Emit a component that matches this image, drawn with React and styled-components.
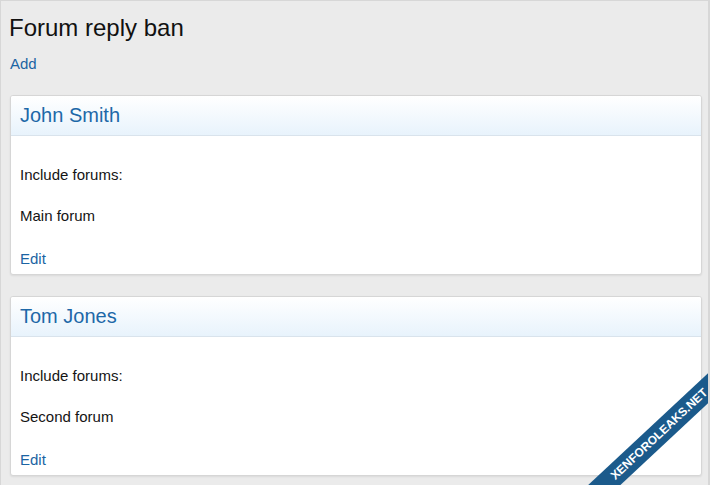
import React from 'react';
import styled, { createGlobalStyle } from 'styled-components';

const GlobalStyle = createGlobalStyle`
  html, body {
    margin: 0;
    padding: 0;
    overflow: hidden;
  }
  body {
    font-family: 'Liberation Sans', Arial, sans-serif;
    background: #ebebeb;
  }
`;

const Page = styled.div`
  position: relative;
  box-sizing: border-box;
  width: 710px;
  height: 485px;
  overflow: hidden;
  background: #ebebeb;
  border: 1px solid #d7d7d7;
  border-bottom: none;
  border-right-width: 2px;
  padding: 0 6px 0 9px;
`;

const Title = styled.h1`
  margin: 12px 0 0 -1px;
  font-size: 24px;
  line-height: 30px;
  font-weight: 400;
  color: #111;
`;

const Link = styled.a`
  color: #1b64a3;
  text-decoration: none;
  font-size: 15px;
  cursor: pointer;
`;

const AddRow = styled.div`
  margin-top: 11px;
  line-height: 20px;
`;

const List = styled.div`
  display: flex;
  flex-direction: column;
  gap: 21px;
  margin-top: 21px;
`;

const Card = styled.section`
  background: #fff;
  border: 1px solid #d6d6d6;
  border-radius: 3px;
  box-shadow: 0 1px 2px rgba(0, 0, 0, 0.08);
  overflow: hidden;
`;

const CardHeader = styled.h2`
  margin: 0;
  height: 40px;
  box-sizing: border-box;
  padding: 0 9px;
  display: flex;
  align-items: center;
  font-size: 20px;
  font-weight: 400;
  color: #1d68a8;
  background: linear-gradient(to bottom, #ffffff, #e8f3fc);
  border-bottom: 1px solid #d9e3ec;
`;

const CardBody = styled.div`
  display: flex;
  flex-direction: column;
  padding: 29px 9px 5px;
`;

const Line = styled.div`
  line-height: 20px;
  font-size: 15px;
  color: #141414;
  margin-top: ${p => p.$gap || 0}px;
`;

const Ribbon = styled.div`
  position: absolute;
  left: 528px;
  top: 422px;
  width: 260px;
  height: 22px;
  background: #1b5a8b;
  color: #fff;
  font-weight: 700;
  font-size: 12px;
  display: flex;
  align-items: center;
  justify-content: center;
  transform: rotate(-43deg);
`;

const bans = [
  { name: 'John Smith', forum: 'Main forum' },
  { name: 'Tom Jones', forum: 'Second forum' },
];

export default function App() {
  return (
    <>
      <GlobalStyle />
      <Page>
        <Title>Forum reply ban</Title>
        <AddRow>
          <Link>Add</Link>
        </AddRow>
        <List>
          {bans.map(b => (
            <Card key={b.name}>
              <CardHeader>{b.name}</CardHeader>
              <CardBody>
                <Line>Include forums:</Line>
                <Line $gap={21}>{b.forum}</Line>
                <Line $gap={23}>
                  <Link>Edit</Link>
                </Line>
              </CardBody>
            </Card>
          ))}
        </List>
        <Ribbon>XENFOROLEAKS.NET</Ribbon>
      </Page>
    </>
  );
}
